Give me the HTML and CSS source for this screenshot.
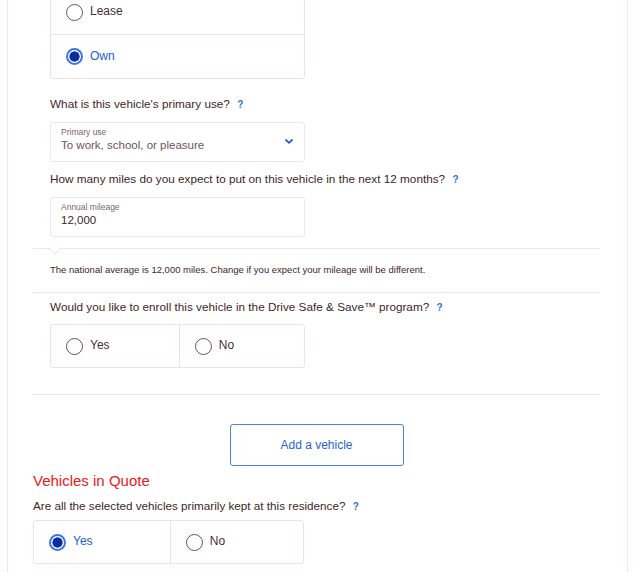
FILE: index.html
```html
<!DOCTYPE html>
<html lang="en">
<head>
    <meta charset="UTF-8">
    <meta name="viewport" content="width=device-width, initial-scale=1.0">
    <title>Vehicle details</title>
    <link rel="stylesheet" href="styles.css">
</head>
<body>
    <div class="page">
        <div class="vehicle">
            <div class="choices stack first">
                <label class="choice">
                    <span class="radio"></span>
                    <span class="choice-text">Lease</span>
                </label>
                <label class="choice selected">
                    <span class="radio"></span>
                    <span class="choice-text">Own</span>
                </label>
            </div>

            <p class="question">What is this vehicle's primary use? <span class="help">?</span></p>
            <div class="field">
                <div class="field-label">Primary use</div>
                <div class="field-value muted">To work, school, or pleasure</div>
                <svg class="chevron" width="10" height="7" viewBox="0 0 10 7">
                    <polyline points="1.5,1.5 5,4.8 8.5,1.5" fill="none" stroke="#1f5fd6" stroke-width="1.8"/>
                </svg>
            </div>

            <p class="question">How many miles do you expect to put on this vehicle in the next 12 months? <span class="help">?</span></p>
            <div class="field">
                <div class="field-label">Annual mileage</div>
                <div class="field-value">12,000</div>
            </div>

            <div class="note">
                <span class="caret"></span>
                The national average is 12,000 miles. Change if you expect your mileage will be different.
            </div>

            <p class="question">Would you like to enroll this vehicle in the Drive Safe &amp; Save™ program? <span class="help">?</span></p>
            <div class="choices row">
                <label class="choice">
                    <span class="radio"></span>
                    <span class="choice-text">Yes</span>
                </label>
                <label class="choice">
                    <span class="radio"></span>
                    <span class="choice-text">No</span>
                </label>
            </div>
        </div>

        <hr class="divider">

        <div class="actions">
            <button class="add-btn">Add a vehicle</button>
        </div>

        <h2 class="section-title">Vehicles in Quote</h2>
        <p class="question small">Are all the selected vehicles primarily kept at this residence? <span class="help">?</span></p>
        <div class="choices row wide">
            <label class="choice selected">
                <span class="radio"></span>
                <span class="choice-text">Yes</span>
            </label>
            <label class="choice">
                <span class="radio"></span>
                <span class="choice-text">No</span>
            </label>
        </div>
    </div>
</body>
</html>
```

FILE: styles.css
```css
body {
    margin: 0;
    font-family: "Liberation Sans", Arial, sans-serif;
    color: #3d1f2c;
    background: #fff;
}
.page {
    margin-left: 7px;
    width: 621px;
    min-height: 600px;
    box-sizing: border-box;
    border-left: 1px solid #f0e5e9;
    border-right: 1px solid #f0e5e9;
    padding: 0 27px 0 25px;
}
.vehicle {
    padding-left: 17px;
}
.choices {
    border: 1px solid #eee2e6;
    border-radius: 3px;
    width: 255px;
    box-sizing: border-box;
}
.choices.first {
    margin-top: -11px;
}
.stack .choice + .choice {
    border-top: 1px solid #eee2e6;
}
.row {
    display: flex;
    height: 44px;
    margin-top: 0;
}
.row .choice {
    flex: 1;
}
.row .choice:first-child {
    flex: 0 0 50.5%;
}
.row .choice + .choice {
    border-left: 1px solid #eee2e6;
}
.row.wide {
    width: 271px;
}
.choice {
    display: flex;
    align-items: center;
    height: 44px;
    padding-left: 15px;
    font-size: 12px;
    color: #4b2d39;
    box-sizing: border-box;
}
.row .choice {
    height: auto;
}
.radio {
    width: 17px;
    height: 17px;
    border: 1.5px solid #6e4f5b;
    border-radius: 50%;
    box-sizing: border-box;
    margin-right: 7px;
    flex-shrink: 0;
}
.selected .radio {
    border: 2px solid #3a78e4;
    background: radial-gradient(circle, #0b2ca3 0 4.8px, #fff 5.4px);
}
.selected .choice-text {
    color: #2160d4;
}
.choice-text {
    margin-top: -2px;
}
.question {
    margin: 17px 0 8px;
    font-size: 11.75px;
    line-height: 16px;
}
.help {
    color: #2f6fd6;
    font-weight: bold;
    font-size: 10px;
    margin-left: 4px;
}
.field {
    position: relative;
    width: 255px;
    height: 40px;
    box-sizing: border-box;
    border: 1px solid #f0e6ea;
    border-radius: 3px;
    padding: 4px 10px 0;
    margin: 9px 0 9px;
}
.field + .question {
    margin-top: 0;
}
.field-label {
    font-size: 8.5px;
    line-height: 10px;
    color: #7a6670;
}
.field-value {
    font-size: 11.5px;
    line-height: 17px;
    color: #3d1f2c;
}
.field-value.muted {
    color: #6c5560;
}
.chevron {
    position: absolute;
    right: 10px;
    top: 15px;
}
.note {
    position: relative;
    margin: 11px 0 0 -17px;
    border-top: 1px solid #f0e6ea;
    border-bottom: 1px solid #f0e6ea;
    padding: 15px 0 16px 17px;
    font-size: 9.5px;
    line-height: 12px;
    color: #3d1f2c;
}
.caret {
    position: absolute;
    left: 18px;
    top: -4.5px;
    width: 7px;
    height: 7px;
    background: #fff;
    border-right: 1px solid #f0e6ea;
    border-bottom: 1px solid #f0e6ea;
    transform: rotate(45deg);
}
.note + .question {
    margin-top: 6px;
}
.divider {
    border: none;
    border-top: 1px solid #e8e3e5;
    margin: 26px 0 0;
}
.actions {
    display: flex;
    justify-content: center;
    padding-top: 29px;
}
.add-btn {
    width: 174px;
    height: 42px;
    background: #fff;
    border: 1px solid #4a84e0;
    border-radius: 3px;
    color: #2a63d4;
    font-family: "Liberation Sans", Arial, sans-serif;
    font-size: 12px;
    cursor: pointer;
}
.section-title {
    margin: 6px 0 0;
    font-size: 15px;
    line-height: 18px;
    font-weight: normal;
    color: #ec1820;
}
.question.small {
    margin: 9px 0 6px;
    font-size: 11.7px;
    line-height: 14px;
}
```
